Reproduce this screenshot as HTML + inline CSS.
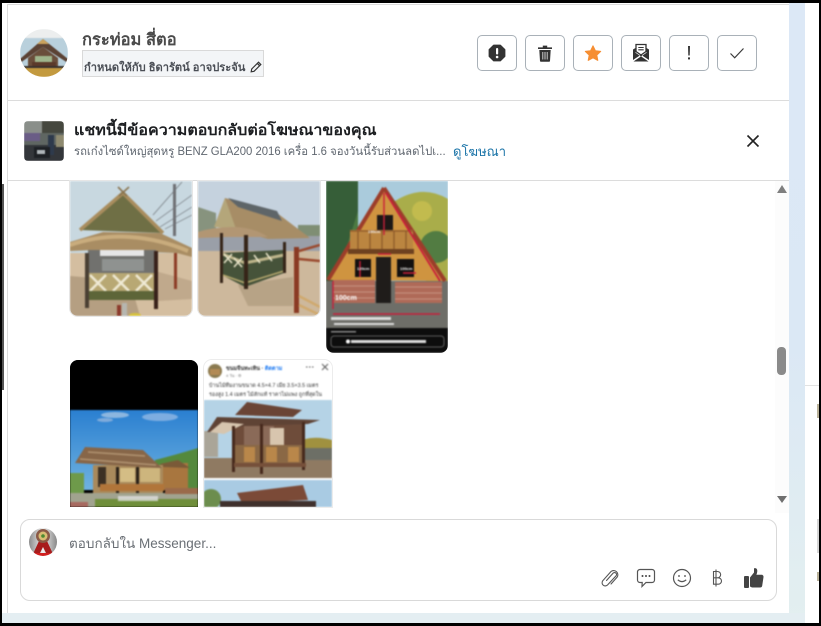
<!DOCTYPE html>
<html lang="th"><head><meta charset="utf-8">
<style>
html,body{margin:0;padding:0}
body{width:821px;height:626px;overflow:hidden;position:relative;background:#fff;font-family:"Liberation Sans","Noto Sans CJK SC",sans-serif;color:#1c1e21}
.a{position:absolute}
.t{position:absolute;white-space:nowrap;transform-origin:0 50%}
.btn{position:absolute;top:35px;width:38px;height:34px;border:1px solid #a9b1b8;border-radius:5px;background:#fff;box-sizing:content-box}
.btn svg{position:absolute;left:9px;top:7px}
.im{position:absolute;overflow:hidden;background:#fff}
.im svg{display:block;filter:blur(.7px)}
</style></head><body>
<div class="a" style="left:0;top:0;width:821px;height:3px;background:#000"></div>
<div class="a" style="left:0;top:0;width:2px;height:626px;background:#000"></div>
<div class="a" style="left:2px;top:184px;width:2px;height:206px;background:#555"></div>
<div class="a" style="left:819px;top:0;width:2px;height:626px;background:#000"></div>
<div class="a" style="left:0;top:623px;width:821px;height:3px;background:#000"></div>
<div class="a" style="left:789px;top:3px;width:16px;height:620px;background:linear-gradient(#dce8f6,#dbe8f5 55%,#e3eff0)"></div>
<div class="a" style="left:2px;top:613px;width:803px;height:10px;background:#e4eef2"></div>
<div class="a" style="left:805px;top:385px;width:14px;height:1px;background:#e2e2e2"></div>
<div class="a" style="left:817px;top:404px;width:2px;height:14px;background:#b9b29a"></div>
<div class="a" style="left:817px;top:519px;width:2px;height:34px;background:#d6d6d6"></div>
<div class="a" style="left:817px;top:572px;width:2px;height:9px;background:#b9b29a"></div>
<div class="a" style="left:7px;top:4px;width:782px;height:1px;background:#dcdcdc"></div>
<div class="a" style="left:7px;top:4px;width:1px;height:609px;background:#dcdcdc"></div>
<div class="a" style="left:8px;top:100px;width:781px;height:1px;background:#dcdcdc"></div>
<div class="a" style="left:8px;top:180px;width:781px;height:1px;background:#dcdcdc"></div>

<!-- avatar -->
<svg class="a" style="left:20px;top:29px" width="48" height="48" viewBox="0 0 48 48">
<defs><clipPath id="c1"><circle cx="24" cy="24" r="24"/></clipPath></defs>
<g clip-path="url(#c1)" style="filter:blur(.4px)"><rect width="48" height="48" fill="#b9d0dc"/><rect y="0" width="48" height="9" fill="#eceeee"/>
<rect y="37" width="48" height="11" fill="#c39a3f"/>
<polygon points="23,10 48,30 48,34 23,18 0,34 0,30" fill="#5b4234"/><polygon points="23,10 29,15 23,15 17,15" fill="#caa25c"/>
<polygon points="23,18 38,29 38,37 8,37 8,29" fill="#6a4e3b"/>
<rect x="15" y="27" width="17" height="6" fill="#9fb58c"/><rect x="12" y="33" width="24" height="5" fill="#5b3a2a"/><rect x="3" y="37" width="42" height="2" fill="#3b3330"/></g></svg>

<div class="t" style="left:82px;top:29px;font-size:16.500px;line-height:22px;font-weight:700;color:#4b4b4b">กระท่อม สี่ตอ</div>
<div class="a" style="left:82px;top:50px;width:180px;height:25px;background:#f3f5f7;border:1px solid #d9d9d9"></div>
<div class="t" style="left:84px;top:60px;font-size:11px;line-height:16px;font-weight:700;color:#4b4f56;transform:scaleX(1.01)">กำหนดให้กับ ธิดารัตน์ อาจประจัน</div>
<svg class="a" style="left:250px;top:61px" width="12" height="12" viewBox="0 0 12 12"><path d="M8.500 1.200 10.800 3.500 4 10.300 1.200 10.800 1.700 8Z M7.300 2.400 9.600 4.700" fill="none" stroke="#333" stroke-width="1.200"/></svg>

<div class="btn" style="left:477px"><svg width="20" height="20" viewBox="0 0 20 20"><path d="M6.800 2.500h6.400L17.500 6.800v6.400L13.200 17.500H6.800L2.500 13.200V6.800Z" fill="#333" stroke="#333" stroke-width="1.800" stroke-linejoin="round"/><rect x="9" y="5" width="2.200" height="6.500" rx="1" fill="#fff"/><circle cx="10.100" cy="14" r="1.300" fill="#fff"/></svg></div>
<div class="btn" style="left:525px"><svg width="20" height="20" viewBox="0 0 20 20"><path d="M3 4.400h14v1.600H3Z M7.800 4.400V2.600h4.400v1.800" fill="#333"/><path d="M4.300 7h11.400l-.7 11a1 1 0 0 1-1 .8H6a1 1 0 0 1-1-.8Z" fill="#333"/><path d="M7.800 9v7.500M10 9v7.500M12.200 9v7.500" stroke="#ddd" stroke-width=".9"/></svg></div>
<div class="btn" style="left:573px"><svg width="20" height="20" viewBox="0 0 20 20"><path d="M10 2.800 12.400 7.700 17.700 8.400 13.800 12.100 14.800 17.400 10 14.800 5.200 17.400 6.200 12.100 2.300 8.400 7.600 7.700Z" fill="#f68e32" stroke="#f68e32" stroke-width="1" stroke-linejoin="round"/></svg></div>
<div class="btn" style="left:621px"><svg width="20" height="20" viewBox="0 0 20 20"><path d="M5 1.500h10v7L10 12 5 8.500Z" fill="#fff" stroke="#333" stroke-width="1.300"/><path d="M7.300 4.500h5.400M7.300 6.800h5.400" stroke="#333" stroke-width="1.100"/><path d="M2 6.500 4.500 5v4.800L10 13.500l5.500-3.700V5L18 6.500V17L10 11.700 2 17Z" fill="#333"/><path d="M2.500 18.500 10 13.400l7.500 5.100Z" fill="#333"/></svg></div>
<div class="btn" style="left:669px"><svg width="20" height="20" viewBox="0 0 20 20"><path d="M9 3h2l-.3 9.500H9.300Z" fill="#333"/><rect x="9" y="14.400" width="2" height="2" fill="#333"/></svg></div>
<div class="btn" style="left:717px"><svg width="20" height="20" viewBox="0 0 20 20"><path d="M3.500 10.500 7.700 14.800 16.500 5.500" fill="none" stroke="#3a3a3a" stroke-width="1.200"/></svg></div>

<!-- ad strip -->
<svg class="a" style="left:24px;top:121px" width="40" height="40" viewBox="0 0 40 40"><defs><clipPath id="c2"><rect width="40" height="40" rx="4"/></clipPath></defs><g clip-path="url(#c2)" style="filter:blur(.5px)"><rect width="40" height="40" fill="#5f6662"/><rect x="0" y="0" width="18" height="12" fill="#8a8f8a"/><rect x="18" y="0" width="22" height="12" fill="#45473e"/><rect x="0" y="12" width="16" height="8" fill="#6a5d86"/><rect y="24" width="40" height="16" fill="#33363a"/><rect x="24" y="14" width="6" height="20" fill="#2e3a4c"/><rect x="10" y="26" width="16" height="11" fill="#1e2125"/><rect x="13" y="29" width="8" height="4" fill="#aeb4b8"/><rect x="32" y="14" width="8" height="12" fill="#8e8a70"/></g></svg>
<div class="t" style="left:74px;top:121px;font-size:15px;line-height:20px;font-weight:700;color:#1c1e21;transform:scaleX(1.07)">แชทนี้มีข้อความตอบกลับต่อโฆษณาของคุณ</div>
<div class="t" style="left:74px;top:143px;font-size:11.500px;line-height:18px;color:#606770;transform:scaleX(.984)">รถเก๋งไซด์ใหญ่สุดหรู BENZ GLA200 2016 เครื่อ 1.6 จองวันนี้รับส่วนลดไปเ...</div>
<div class="t" style="left:453px;top:143px;font-size:13px;line-height:18px;color:#1b74a8">ดูโฆษณา</div>
<svg class="a" style="left:746px;top:134px" width="14" height="14" viewBox="0 0 14 14"><path d="M1.500 1.500 12.500 12.500M12.500 1.500 1.500 12.500" stroke="#222" stroke-width="1.600"/></svg>

<!-- image 1 -->
<div class="im" style="left:70px;top:181px;width:122px;height:135px;border-radius:0 0 8px 8px;box-shadow:0 0 0 1px #e6e6e6">
<svg width="122" height="135" viewBox="0 0 122 135">
<rect width="122" height="75" fill="#c8d8e0"/><rect y="72" width="122" height="63" fill="#d4bea0"/><polygon points="0,95 60,100 70,135 0,135" fill="#b59f82"/><polygon points="85,90 122,100 122,118 88,120" fill="#c0a98c"/>
<rect x="103" y="3" width="3" height="52" fill="#6f7074"/><path d="M83 34 112 1M86 40 122 14M90 46 122 26M95 48 122 34" stroke="#70757a" stroke-width=".7" fill="none"/>
<polygon points="53,12 93,52 10,49" fill="#6f6f45"/><path d="M53 12 93 52M53 12 10 49" stroke="#a98d5e" stroke-width="3.500" fill="none"/><path d="M48 6 57 15M59 6 49 15" stroke="#8a7550" stroke-width="1.600"/>
<polygon points="0,61 33,51 90,52 122,67 122,76 107,72 23,69 0,70" fill="#a98d63"/><path d="M0 64Q30 54 60 56T118 70" stroke="#c9ac7d" stroke-width="4" fill="none"/>
<rect x="18" y="69" width="68" height="23" fill="#71716e"/><rect x="30" y="69" width="44" height="6" fill="#e6e6e6"/><rect x="32" y="78" width="42" height="12" fill="#8f9290"/>
<rect x="17" y="92" width="68" height="27" fill="#b8a874"/><path d="M20 94 36 110M36 94 20 110M43 94 59 110M59 94 43 110M66 94 82 110M82 94 66 110" stroke="#efe9d4" stroke-width="2.500"/><rect x="17" y="110" width="68" height="9" fill="#5d6538"/>
<rect x="15" y="72" width="4" height="55" fill="#4a3f33"/><rect x="84" y="70" width="4" height="58" fill="#38211a"/><rect x="104" y="72" width="3" height="36" fill="#8c3c26"/>
<rect x="47" y="124" width="4" height="11" fill="#8b3a2c"/><rect x="52" y="122" width="5" height="13" fill="#b6b6b0"/><ellipse cx="65" cy="134" rx="6" ry="2" fill="#d7c23f"/></svg></div>
<!-- image 2 -->
<div class="im" style="left:198px;top:181px;width:122px;height:135px;border-radius:0 0 8px 8px;box-shadow:0 0 0 1px #e6e6e6">
<svg width="122" height="135" viewBox="0 0 122 135">
<rect width="122" height="58" fill="#c5d2de"/><polygon points="0,26 18,32 18,50 0,52" fill="#87937e"/><rect x="100" y="44" width="22" height="12" fill="#7f8e74"/><rect y="55" width="122" height="17" fill="#9a9fa8"/><rect y="70" width="122" height="65" fill="#cdb89c"/><polygon points="40,104 95,96 95,125 50,125" fill="#b7a386"/>
<polygon points="27,17 79,32 112,57 70,58 40,50 17,44" fill="#a78d66"/><polygon points="27,17 38,48 16,46" fill="#b4a67a"/><polygon points="30,17 79,30 84,40 40,26" fill="#5e6568"/>
<path d="M0 51Q15 46 35 46T70 56L30 56 0 57Z" fill="#b29673"/>
<polygon points="22,72 85,69 86,92 47,106 22,93" fill="#46533a"/><path d="M22 72 47 82 86 74" stroke="#bdb48a" stroke-width="3" fill="none"/><path d="M26 73 34 82M34 73 26 82M36 77 44 86M44 77 36 86M56 74 62 82M68 72 74 80" stroke="#e8e3c8" stroke-width="1.500"/><path d="M22 93 47 102 86 90" stroke="#b8a96f" stroke-width="1.500" fill="none"/>
<rect x="22" y="52" width="3" height="50" fill="#352418"/><rect x="46" y="54" width="4" height="54" fill="#352418"/><rect x="85" y="61" width="3" height="31" fill="#352418"/>
<rect x="96" y="66" width="5" height="66" fill="#8a3a23"/><path d="M101 70 122 64M101 78 122 80" stroke="#9a4a2f" stroke-width="2.500"/><path d="M101 115 122 126M101 124 122 134" stroke="#cfa96e" stroke-width="2.500"/></svg></div>
<!-- image 3 -->
<div class="im" style="left:326px;top:181px;width:122px;height:172px;border-radius:0 0 8px 8px">
<svg width="122" height="172" viewBox="0 0 122 172">
<rect width="122" height="110" fill="#aacbdc"/><rect x="0" y="0" width="32" height="100" fill="#365e38"/><polygon points="32,30 32,100 10,100" fill="#4d7a42"/><path d="M66 22Q95 2 122 18V100H100Z" fill="#a9ad4a"/><circle cx="110" cy="66" r="16" fill="#527c42"/><circle cx="96" cy="30" r="10" fill="#c2bb4e"/>
<rect y="100" width="122" height="47" fill="#6e6e68"/>
<polygon points="58,7 119,100 2,99" fill="#cf9440"/><path d="M58 7 119 100M58 7 2 99" stroke="#9c3d2a" stroke-width="4" fill="none"/>
<rect x="51" y="34" width="16" height="15" fill="#1d1816"/><rect x="24" y="49" width="63" height="20" fill="#bb8540"/><path d="M24 50h63M32 50v18M44 50v18M56 50v18M68 50v18M80 50v18" stroke="#8f5a2a" stroke-width="1.300"/><rect x="22" y="68" width="66" height="5" fill="#6d4120"/>
<rect x="29" y="78" width="16" height="18" fill="#121010"/><rect x="71" y="78" width="17" height="18" fill="#121010"/><rect x="50" y="76" width="15" height="46" fill="#1f1c1a"/>
<rect x="7" y="99" width="42" height="23" fill="#af6a58"/><rect x="69" y="101" width="47" height="21" fill="#af6a58"/><path d="M7 105h42M7 111h42M7 117h42M69 106h47M69 112h47M69 118h47" stroke="#cfa190" stroke-width=".8"/>
<path d="M58 12V54M7 100V128M7 133H114M34 80V96M77 92H90M52 73H65" stroke="#c81e3a" stroke-width="1.400"/><path d="M60 12 114 100" stroke="#c81e3a" stroke-width="1.800"/>
<text x="9" y="119" font-size="7" font-weight="700" fill="#fff" font-family="Liberation Sans">100cm</text>
<text x="31" y="89" font-size="4" font-weight="700" fill="#fff" font-family="Liberation Sans">120cm</text>
<text x="74" y="89" font-size="4" font-weight="700" fill="#fff" font-family="Liberation Sans">100cm</text>
<text x="42" y="52" font-size="4" font-weight="700" fill="#fff" font-family="Liberation Sans">190cm</text>
<rect x="5" y="136" width="60" height="3" fill="#f0f0f0" opacity=".85"/><rect x="8" y="142" width="60" height="2" fill="#f0f0f0" opacity=".85"/>
<rect y="147" width="122" height="25" fill="#0d0d0d"/><rect x="5" y="150" width="25" height="1.500" fill="#888"/><rect x="5" y="155" width="113" height="11" rx="3" fill="none" stroke="#777" stroke-width=".8"/><rect x="25" y="159" width="75" height="3" fill="#dcdcdc"/><circle cx="22" cy="160.500" r="2" fill="#fff"/></svg></div>
<!-- image 4 -->
<div class="im" style="left:70px;top:360px;width:128px;height:147px;border-radius:8px 8px 0 0;background:#000">
<svg width="128" height="147" viewBox="0 0 128 147">
<defs><linearGradient id="sky" x1="0" x2="0" y1="0" y2="1"><stop offset="0" stop-color="#2a7fd0"/><stop offset="1" stop-color="#6fb2e0"/></linearGradient></defs>
<rect width="128" height="50" fill="#000"/><rect y="50" width="128" height="80" fill="url(#sky)"/><ellipse cx="45" cy="55" rx="14" ry="3" fill="#8cb6df"/><ellipse cx="90" cy="57" rx="18" ry="4" fill="#7dade0"/><ellipse cx="35" cy="60" rx="8" ry="2" fill="#7fabdb"/>
<path d="M85 100Q105 95 128 88V130H85Z" fill="#54893d"/><rect y="113" width="14" height="22" fill="#6e9a4a"/>
<rect x="93" y="103" width="25" height="27" fill="#a8763f"/><polygon points="90,104 108,100 120,108 92,107" fill="#7a5a38"/>
<rect x="23" y="105" width="70" height="30" fill="#a98a5c"/><rect x="28" y="107" width="8" height="20" fill="#3c3024"/><rect x="46" y="107" width="3" height="27" fill="#2a2118"/><rect x="66" y="107" width="3" height="27" fill="#2a2118"/><rect x="50" y="108" width="15" height="14" fill="#d4bd85"/><rect x="70" y="108" width="20" height="14" fill="#cdb57d"/>
<polygon points="15,87 73,90 92,108 5,103" fill="#876648"/><path d="M18 92 75 96M10 99 86 105" stroke="#b09270" stroke-width="1.600"/>
<rect x="30" y="124" width="64" height="7" fill="#b1753a"/>
<rect y="133" width="128" height="14" fill="#a1a38f"/><rect x="25" y="139" width="103" height="8" fill="#6f8e3a"/><rect x="95" y="128" width="33" height="6" fill="#9a6a4a"/><rect x="48" y="136" width="40" height="5" fill="#dedede" opacity=".8"/><rect y="142" width="18" height="5" fill="#a76a60"/></svg></div>
<!-- image 5 -->
<div class="im" style="left:204px;top:360px;width:128px;height:147px;border-radius:8px 8px 0 0;box-shadow:0 0 0 1px #ececec">
<svg width="128" height="147" viewBox="0 0 128 147">
<rect width="128" height="147" fill="#fff"/><circle cx="11" cy="11" r="7" fill="#8a7a50"/><rect x="6" y="9" width="10" height="6" fill="#b28a55"/>
<text x="22" y="10" font-size="5.500" font-weight="700" fill="#333" font-family="Liberation Sans">ขนมจีนทะเทิน · <tspan fill="#1877f2">ติดตาม</tspan></text>
<text x="22" y="17" font-size="4" fill="#777" font-family="Liberation Sans">4 วัน · ⚙</text>
<path d="M102 7h1.500M105 7h1.500M108 7h1.500M118 4l6 6M124 4l-6 6" stroke="#555" stroke-width=".9" fill="none"/>
<text x="5" y="27" font-size="5.400" fill="#333" font-family="Liberation Sans">บ้านไม้ทีมงานขนาด 4.5×4.7 เมีย 3.5×3.5 เมตร</text>
<text x="5" y="36" font-size="5.400" fill="#333" font-family="Liberation Sans">รองสูง 1.4 เมตร ไม้สักแท้ ราคาไม่แพง ถูกที่สุดใน</text>
<rect y="40" width="128" height="78" fill="#b5d3e6"/><rect y="98" width="128" height="20" fill="#8f7a62"/>
<path d="M90 84Q105 74 128 80V92H96Z" fill="#a0913f"/><rect x="100" y="88" width="28" height="12" fill="#6d6f66"/>
<rect y="71" width="14" height="26" fill="#a89a85" opacity=".8"/>
<rect x="29" y="62" width="72" height="34" fill="#6e4c3a"/><rect x="40" y="66" width="30" height="20" fill="#8a6a58"/><rect x="66" y="68" width="14" height="18" fill="#d8c5ae"/>
<rect x="31" y="85" width="68" height="18" fill="#8a6845"/><rect x="40" y="87" width="11" height="15" fill="#b9874a"/><rect x="62" y="87" width="11" height="15" fill="#b9874a"/><rect x="84" y="87" width="11" height="15" fill="#b9874a"/>
<polygon points="31,55 43,42 98,50 89,57" fill="#6a4435"/>
<polygon points="3,72 13,57 116,60 104,64 40,66 18,72" fill="#5f4335"/><polygon points="6,72 18,62 40,64 20,74" fill="#d7c5ae"/>
<rect x="28" y="66" width="3" height="46" fill="#46291c"/><rect x="56" y="64" width="3" height="50" fill="#46291c"/><rect x="98" y="62" width="3" height="48" fill="#46291c"/><rect x="30" y="103" width="72" height="4" fill="#76503a"/>
<rect y="118" width="128" height="2" fill="#fff"/><rect y="120" width="128" height="27" fill="#a9cbe3"/><circle cx="7" cy="139" r="10" fill="#6c8d4d"/><polygon points="33,133 99,125 104,140 38,143" fill="#7b4a37"/><rect x="16" y="141" width="96" height="6" fill="#3f302c"/></svg></div>

<!-- scrollbar -->
<div class="a" style="left:775px;top:181px;width:14px;height:332px;background:#fcfcfc"></div>
<svg class="a" style="left:776px;top:184px" width="12" height="10"><path d="M6 1 11 9H1Z" fill="#7f7f7f"/></svg>
<div class="a" style="left:777px;top:347px;width:9px;height:28px;border-radius:4px;background:#8a8a8a"></div>
<svg class="a" style="left:776px;top:495px" width="12" height="9"><path d="M1 1H11L6 8Z" fill="#6f6f6f"/></svg>

<!-- composer -->
<div class="a" style="left:20px;top:519px;width:755px;height:80px;border:1px solid #d9d9d9;border-radius:10px;background:#fff"></div>
<svg class="a" style="left:29px;top:528px" width="28" height="28" viewBox="0 0 28 28"><defs><clipPath id="c3"><circle cx="14" cy="14" r="14"/></clipPath><linearGradient id="g1" x1="0" x2="1"><stop offset="0" stop-color="#8b8b8b"/><stop offset=".5" stop-color="#f0f0f0"/><stop offset="1" stop-color="#888"/></linearGradient></defs><g clip-path="url(#c3)"><rect width="28" height="28" fill="url(#g1)"/><polygon points="10,13 18,13 24,26 17,25 14,19 11,25 4,26" fill="#a81c1c"/><rect x="6" y="25" width="16" height="3" fill="#d11f1f"/><circle cx="14" cy="8" r="7" fill="#8b5a46"/><circle cx="14" cy="8" r="4.500" fill="#d9bd73"/><circle cx="14" cy="8" r="1.800" fill="#4c8a30"/></g></svg>
<div class="t" style="left:69px;top:535px;font-size:13.500px;line-height:18px;color:#6a6f75">ตอบกลับใน Messenger...</div>

<svg class="a" style="left:600px;top:568px" width="20" height="20" viewBox="0 0 20 20"><path d="M6.500 12.500 13 5.200a2 2 0 0 1 3 2.700L7.500 17a3.200 3.200 0 0 1-4.800-4.200L11 3.500a4.200 4.200 0 0 1 6.200 5.500L11 16" fill="none" stroke="#555" stroke-width="1.100" stroke-linecap="round"/></svg>
<svg class="a" style="left:636px;top:568px" width="20" height="20" viewBox="0 0 20 20"><path d="M4 1.500h12a2.500 2.500 0 0 1 2.500 2.500v8a2.500 2.500 0 0 1-2.500 2.500h-6L6 18.500l.2-4H4A2.500 2.500 0 0 1 1.500 12V4A2.500 2.500 0 0 1 4 1.500Z" fill="none" stroke="#555" stroke-width="1.200"/><circle cx="6.500" cy="8" r="1" fill="#444"/><circle cx="10" cy="8" r="1" fill="#444"/><circle cx="13.500" cy="8" r="1" fill="#444"/></svg>
<svg class="a" style="left:672px;top:568px" width="20" height="20" viewBox="0 0 20 20"><circle cx="10" cy="10" r="8.500" fill="none" stroke="#555" stroke-width="1.200"/><circle cx="7" cy="8" r=".9" fill="#444"/><circle cx="13" cy="8" r=".9" fill="#444"/><path d="M5.800 11.800Q10 15.500 14.200 11.800" fill="none" stroke="#555" stroke-width="1.200"/></svg>
<svg class="a" style="left:707px;top:568px" width="20" height="20" viewBox="0 0 20 20"><path d="M6.500 3.500h4a3 3 0 0 1 0 6.300h-4ZM6.500 9.800h4.800a3.200 3.200 0 0 1 0 6.400H6.500ZM6.500 3.500v12.700M9 1.500v17" fill="none" stroke="#555" stroke-width="1.100"/></svg>
<svg class="a" style="left:743px;top:567px" width="22" height="22" viewBox="0 0 22 22"><rect x="1" y="9" width="5" height="12" rx="1" fill="#444"/><path d="M7 10.500 11 5.500V1.800c0-1 2.800-1 3.200 1.200.3 1.700-.3 3.500-.8 4.800h5.200c1.300 0 2.100 1.100 1.900 2.300l-1.300 8.600c-.2 1.100-1 1.800-2.100 1.800H10c-1.500 0-3-.7-3-1.500Z" fill="#444"/></svg>
</body></html>
